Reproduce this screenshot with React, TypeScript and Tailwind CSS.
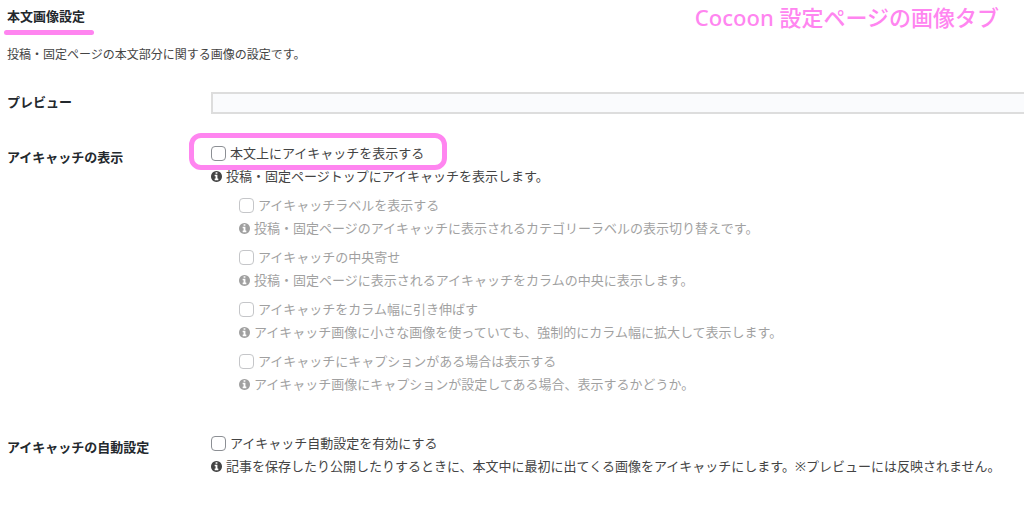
import { useState } from 'react'
import type { ReactNode } from 'react'

const subOptions = [
  {
    id: 'eyecatch-label',
    label: 'アイキャッチラベルを表示する',
    tip: '投稿・固定ページのアイキャッチに表示されるカテゴリーラベルの表示切り替えです。',
  },
  {
    id: 'eyecatch-center',
    label: 'アイキャッチの中央寄せ',
    tip: '投稿・固定ページに表示されるアイキャッチをカラムの中央に表示します。',
  },
  {
    id: 'eyecatch-wide',
    label: 'アイキャッチをカラム幅に引き伸ばす',
    tip: 'アイキャッチ画像に小さな画像を使っていても、強制的にカラム幅に拡大して表示します。',
  },
  {
    id: 'eyecatch-caption',
    label: 'アイキャッチにキャプションがある場合は表示する',
    tip: 'アイキャッチ画像にキャプションが設定してある場合、表示するかどうか。',
  },
]

function InfoIcon() {
  return (
    <svg viewBox="128 128 1536 1536" fill="currentColor" className="h-[11px] w-[11px] shrink-0" aria-hidden="true">
      <path d="M1152 1376v-160q0-14-9-23t-23-9h-96v-512q0-14-9-23t-23-9h-320q-14 0-23 9t-9 23v160q0 14 9 23t23 9h96v320h-96q-14 0-23 9t-9 23v160q0 14 9 23t23 9h448q14 0 23-9t9-23zm-128-896v-160q0-14-9-23t-23-9h-192q-14 0-23 9t-9 23v160q0 14 9 23t23 9h192q14 0 23-9t9-23zm640 416q0 209-103 385.5t-279.5 279.5-385.5 103-385.5-103-279.5-279.5-103-385.5 103-385.5 279.5-279.5 385.5-103 385.5 103 279.5 279.5 103 385.5z" />
    </svg>
  )
}

interface OptionProps {
  id: string
  label: string
  tip: string
  checked: boolean
  onChange: (checked: boolean) => void
  marked?: boolean
}

function Option({ id, label, tip, checked, onChange, marked }: OptionProps) {
  return (
    <div className="flex flex-col gap-[3px]">
      <div className="relative flex h-5 items-center gap-1">
        <input
          id={id}
          type="checkbox"
          checked={checked}
          onChange={(e) => onChange(e.target.checked)}
          className="h-[15px] w-[15px] shrink-0 appearance-none rounded border border-[#8c8f94] bg-white checked:bg-[#2271b1]"
        />
        <label htmlFor={id}>{label}</label>
        {/* Pink marker frame */}
        {marked && (
          <span className="pointer-events-none absolute -left-[22px] -top-[10px] z-10 h-[37px] w-[258px] rounded-xl border-[5px] border-[#ff85f0]" />
        )}
      </div>
      <p className="flex h-5 items-center gap-1 whitespace-nowrap">
        <InfoIcon />
        {tip}
      </p>
    </div>
  )
}

function Row({ title, children }: { title: string; children: ReactNode }) {
  return (
    <section className="flex">
      <h3 className="w-[204px] shrink-0 pt-1 font-bold text-[#23282d]">{title}</h3>
      <div className="min-w-0 flex-1">{children}</div>
    </section>
  )
}

export default function App() {
  const [values, setValues] = useState<Record<string, boolean>>({})

  const bind = (id: string) => ({
    id,
    checked: !!values[id],
    onChange: (checked: boolean) => setValues((prev) => ({ ...prev, [id]: checked })),
  })

  return (
    <main className="min-h-screen overflow-hidden bg-white pl-[7px] pt-[6px] font-['Noto_Sans','Noto_Sans_CJK_JP',sans-serif] text-[13px] leading-5 text-[#444]">
      <header className="flex items-start justify-between">
        <h2 className="relative font-bold text-[#23282d]">
          本文画像設定
          <span className="absolute -left-[3px] top-6 h-[5px] w-[90px] rounded-full bg-[#ff85f0]" />
        </h2>
        <p className="h-[39px] pr-[25px] text-[22px] font-medium leading-[22px] text-[#ff85f0]">
          Cocoon 設定ページの画像タブ
        </p>
      </header>

      <p className="text-xs leading-5">投稿・固定ページの本文部分に関する画像の設定です。</p>

      <div className="mt-[27px] flex">
        <h3 className="w-[204px] shrink-0 font-bold text-[#23282d]">プレビュー</h3>
        <div className="h-[22px] flex-1 border-2 border-r-0 border-[#ddd] bg-[#fafbfd]" />
      </div>

      <div className="mt-[29px] flex flex-col gap-[39px]">
        <Row title="アイキャッチの表示">
          <Option
            {...bind('eyecatch-visible')}
            label="本文上にアイキャッチを表示する"
            tip="投稿・固定ページトップにアイキャッチを表示します。"
            marked
          />
          <div className="mt-[9px] flex flex-col gap-[9px] pl-7 opacity-50">
            {subOptions.map((opt) => (
              <Option key={opt.id} {...bind(opt.id)} label={opt.label} tip={opt.tip} />
            ))}
          </div>
        </Row>

        <Row title="アイキャッチの自動設定">
          <Option
            {...bind('auto-eyecatch')}
            label="アイキャッチ自動設定を有効にする"
            tip="記事を保存したり公開したりするときに、本文中に最初に出てくる画像をアイキャッチにします。※プレビューには反映されません。"
          />
        </Row>
      </div>
    </main>
  )
}
